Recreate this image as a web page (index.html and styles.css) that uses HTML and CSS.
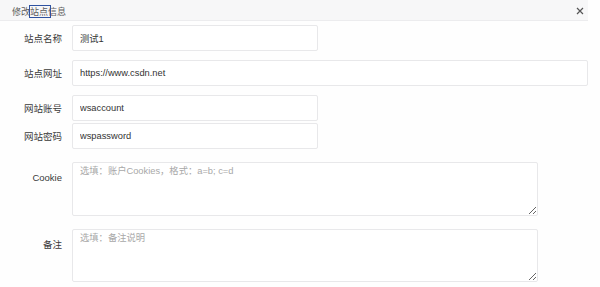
FILE: index.html
```html
<!DOCTYPE html>
<html lang="zh-CN">
<head>
    <meta charset="UTF-8">
    <meta name="viewport" content="width=device-width, initial-scale=1.0">
    <title>修改站点信息</title>
    <link rel="stylesheet" href="styles.css">
</head>
<body>
    <div class="dialog">
        <div class="dialog-header">
            <div class="dialog-title">修改<span class="mark">站点</span>信息</div>
            <span class="close-btn">
                <svg width="8" height="8" viewBox="0 0 8 8">
                    <path d="M1 1 L7 7 M7 1 L1 7" stroke="#555" stroke-width="1.2" fill="none"/>
                </svg>
            </span>
        </div>

        <form class="site-form">
            <div class="form-row row-first">
                <label class="form-label">站点名称</label>
                <input type="text" class="form-input input-short" value="测试1">
            </div>

            <div class="form-row row-url">
                <label class="form-label">站点网址</label>
                <input type="text" class="form-input input-full" value="https://www.csdn.net">
            </div>

            <div class="form-row row-account">
                <label class="form-label">网站账号</label>
                <input type="text" class="form-input input-short" value="wsaccount">
            </div>

            <div class="form-row row-password">
                <label class="form-label">网站密码</label>
                <input type="text" class="form-input input-short" value="wspassword">
            </div>

            <div class="form-row row-cookie area-row">
                <label class="form-label">Cookie</label>
                <textarea class="form-area area-cookie" placeholder="选填：账户Cookies，格式：a=b; c=d"></textarea>
            </div>

            <div class="form-row row-note area-row">
                <label class="form-label">备注</label>
                <textarea class="form-area area-note" placeholder="选填：备注说明"></textarea>
            </div>
        </form>
    </div>
</body>
</html>
```

FILE: styles.css
```css
* {
    margin: 0;
    padding: 0;
    box-sizing: border-box;
}

body {
    font-family: "Liberation Sans", "Noto Sans CJK SC", sans-serif;
    background: #fefefe;
    color: #333;
}

.dialog {
    width: 588px;
    background: #fefefe;
}

.dialog-header {
    height: 21px;
    background: #f7f7f8;
    border-bottom: 1px solid #ececee;
    display: flex;
    align-items: center;
    justify-content: space-between;
    padding: 0 4px 0 12px;
}

.dialog-title {
    font-size: 9px;
    color: #5e5e5e;
    line-height: 11px;
    padding-top: 5px;
}

.mark {
    position: relative;
}

.mark::after {
    content: '';
    position: absolute;
    left: -1px;
    right: -3px;
    top: -2px;
    bottom: -1px;
    border: 1.5px solid #2f52a0;
}

.close-btn {
    display: flex;
    width: 8px;
    height: 8px;
    margin-top: 1px;
}

.site-form {
    display: flex;
    flex-direction: column;
}

.form-row {
    display: flex;
    align-items: center;
}

.row-first { margin-top: 4px; }
.row-url { margin-top: 9px; }
.row-account { margin-top: 9px; }
.row-password { margin-top: 2px; }
.row-cookie { margin-top: 13px; }
.row-note { margin-top: 13px; }

.area-row {
    align-items: flex-start;
}

.form-label {
    width: 62px;
    margin-right: 10px;
    text-align: right;
    font-size: 9.5px;
    line-height: 11px;
    color: #3a3a3a;
}

.area-row .form-label {
    padding-top: 10px;
}

.form-input,
.form-area {
    font-family: "Liberation Sans", "Noto Sans CJK SC", sans-serif;
    font-size: 9.3px;
    color: #333;
    border: 1px solid #e8e8ea;
    border-radius: 2px;
    background: #fff;
    padding: 0 7px;
    outline: none;
}

.form-input {
    height: 26px;
}

.input-short {
    width: 246px;
}

.input-full {
    width: 516px;
}

.form-area {
    width: 466px;
    padding: 2px 7px;
    line-height: 13px;
    resize: vertical;
}

.form-area::placeholder {
    color: #a8a8a8;
}

.area-cookie {
    height: 54px;
}

.area-note {
    height: 53px;
}
```
